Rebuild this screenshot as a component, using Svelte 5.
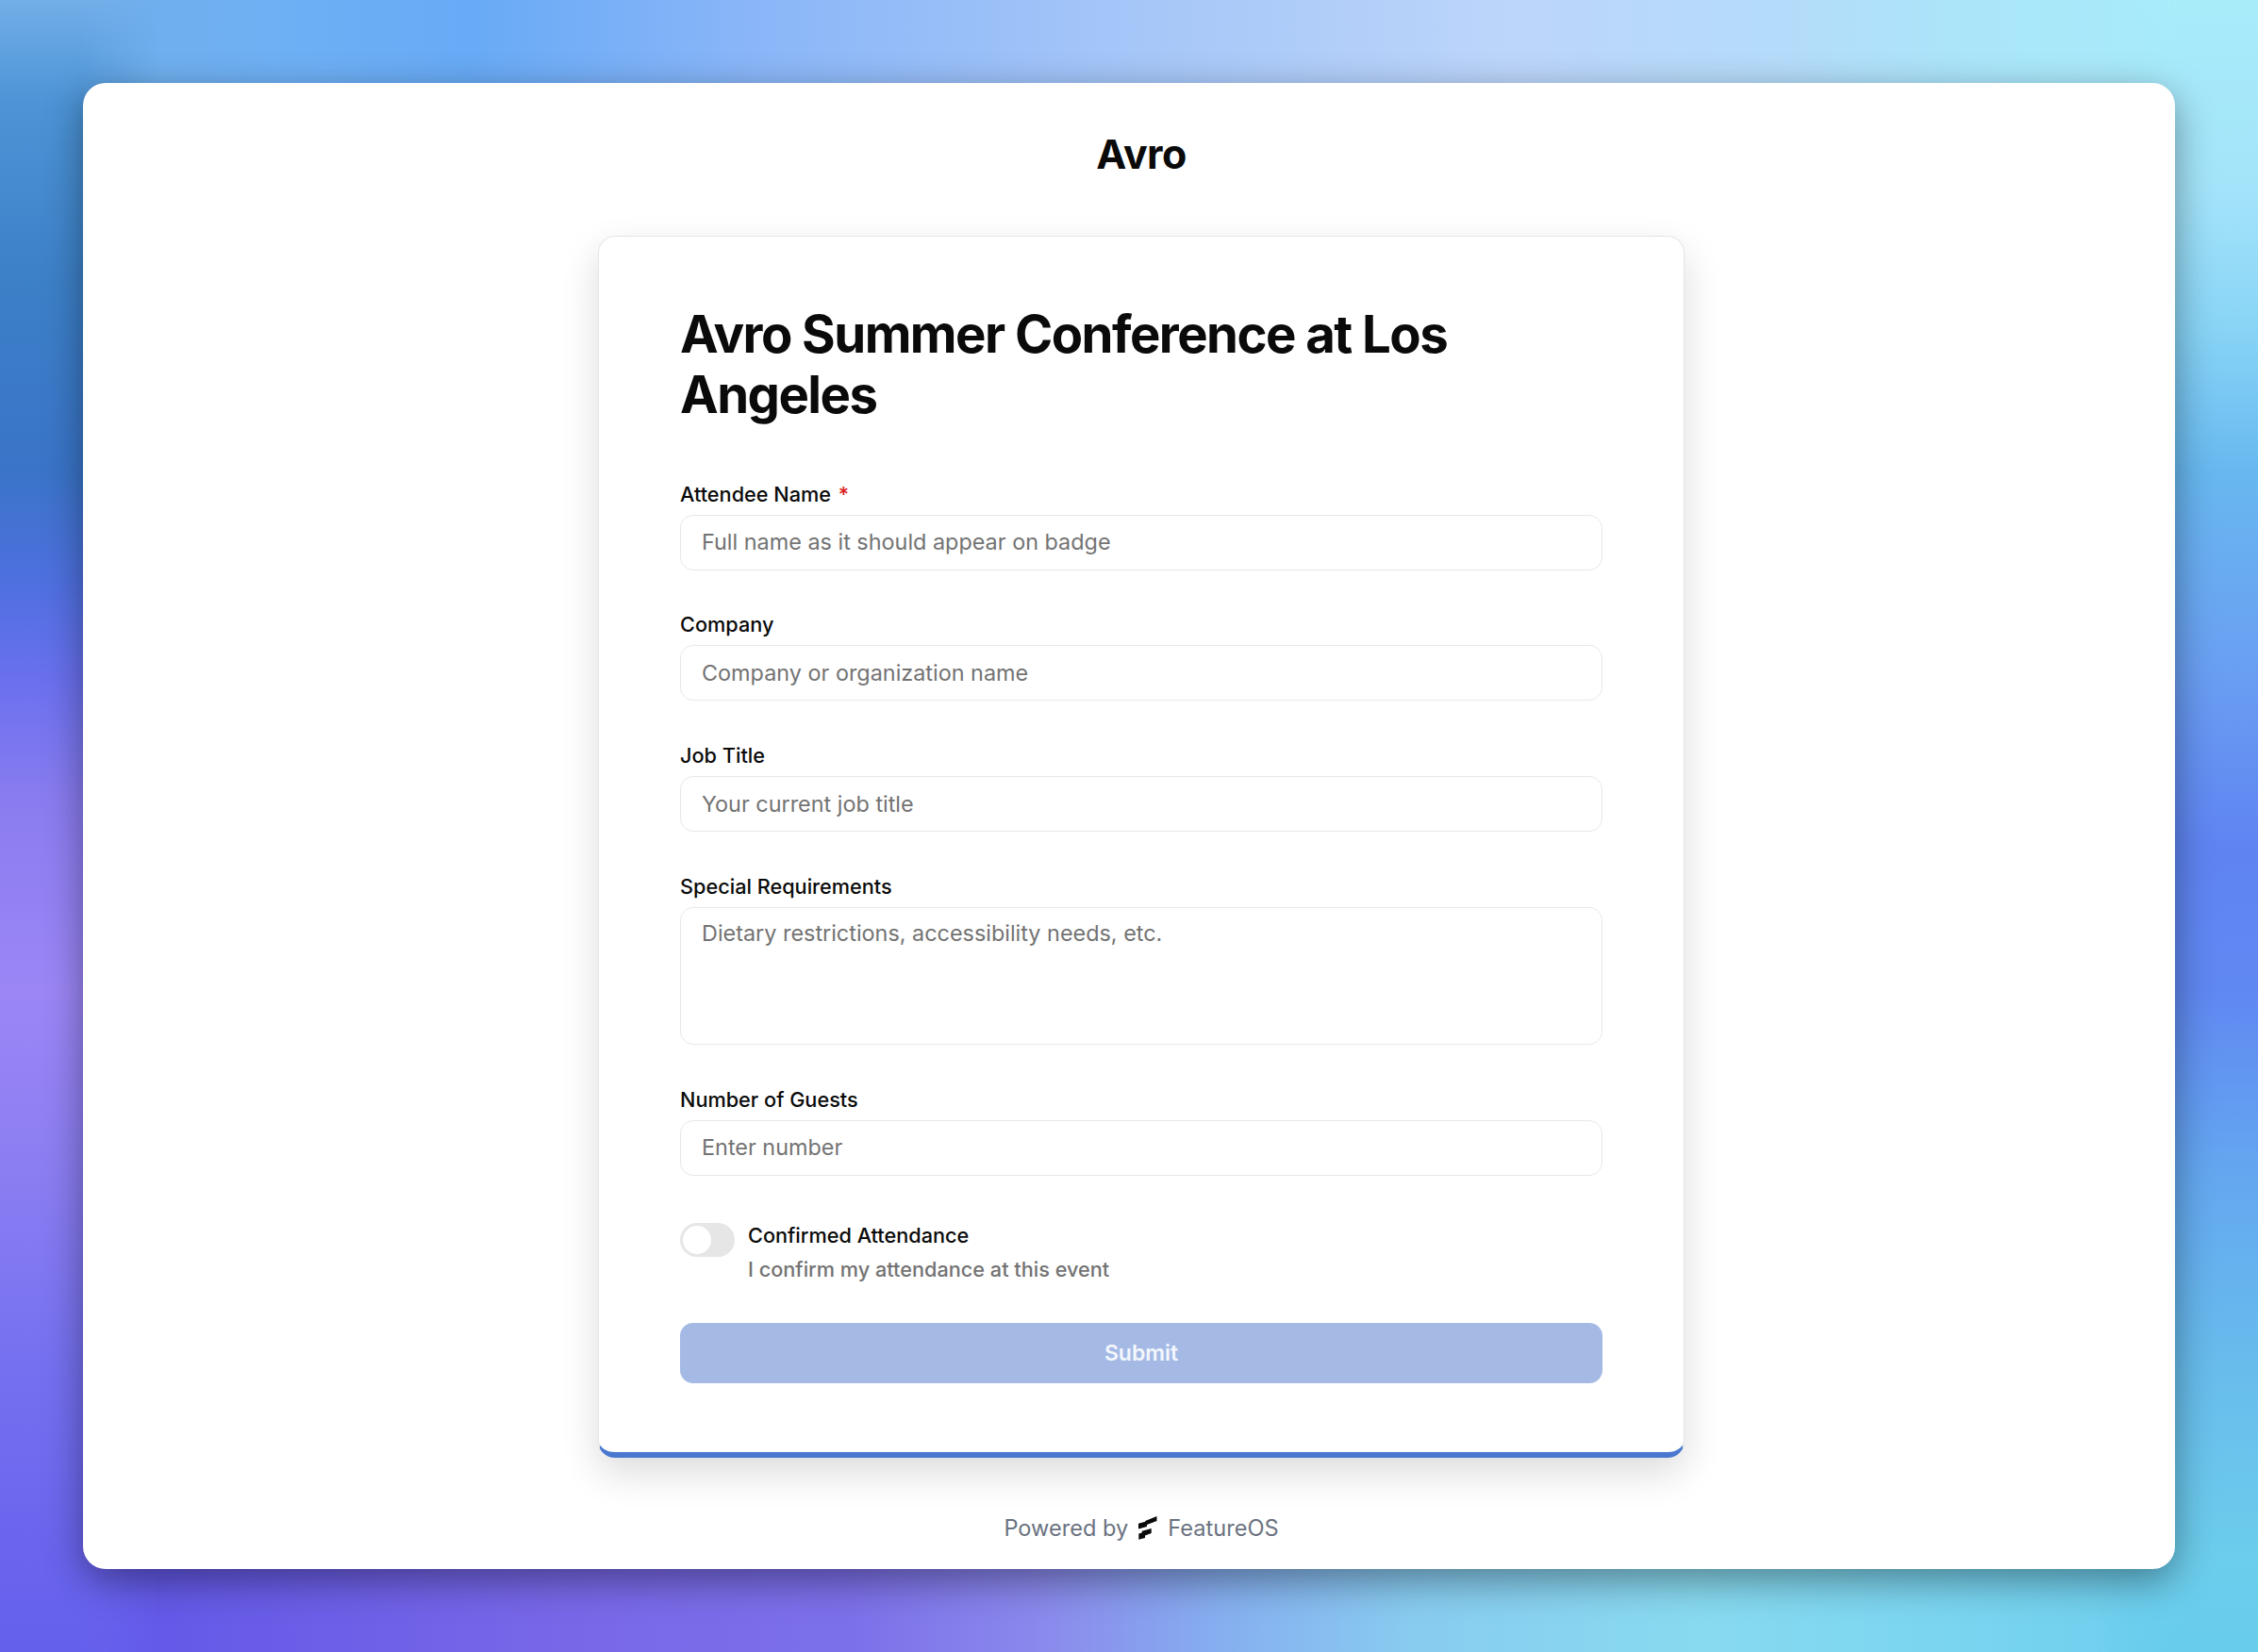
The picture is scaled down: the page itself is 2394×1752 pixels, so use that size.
<script>
  const fields = [
    { label: 'Attendee Name', required: true, placeholder: 'Full name as it should appear on badge' },
    { label: 'Company', placeholder: 'Company or organization name' },
    { label: 'Job Title', placeholder: 'Your current job title' },
    { label: 'Special Requirements', placeholder: 'Dietary restrictions, accessibility needs, etc.', multiline: true },
    { label: 'Number of Guests', placeholder: 'Enter number' }
  ]
</script>

<div class="page">
  <main class="window">
    <div class="brand">Avro</div>

    <form class="card" onsubmit={(e) => e.preventDefault()}>
      <h1>Avro Summer Conference at Los Angeles</h1>

      {#each fields as field}
        <div class="field">
          <label for={field.label}>
            {field.label}
            {#if field.required}<span class="req">*</span>{/if}
          </label>
          {#if field.multiline}
            <textarea id={field.label} placeholder={field.placeholder}></textarea>
          {:else}
            <input id={field.label} type="text" placeholder={field.placeholder} />
          {/if}
        </div>
      {/each}

      <div class="confirm">
        <span class="toggle"><span class="knob"></span></span>
        <div class="confirm-text">
          <div class="confirm-title">Confirmed Attendance</div>
          <div class="confirm-desc">I confirm my attendance at this event</div>
        </div>
      </div>

      <button type="submit">Submit</button>
    </form>

    <footer class="powered">
      <span>Powered by</span>
      <svg width="20" height="25" viewBox="0 0 20 25" aria-hidden="true">
        <path d="M0 7.7 7.3 5.7 7.3 5 19.5 0v5L9 9v2L0 13.5z" fill="#0a0a0a" />
        <path d="M3.7 15.7 13.7 13V18L7 20.5V23L.3 24.7V18.5L3.7 17.5z" fill="#0a0a0a" />
      </svg>
      <span>FeatureOS</span>
    </footer>
  </main>
</div>

<style>
  :global(body) {
    margin: 0;
    overflow: hidden;
  }

  .page {
    position: relative;
    box-sizing: border-box;
    width: 2394px;
    height: 1752px;
    padding: 88px;
    font-family: Inter, "Liberation Sans", sans-serif;
    background:
      linear-gradient(90deg, #72aee8 0, #6eb0f4 300px, #68aaf6 500px, #8ab6f8 800px, #a5c6f8 1200px, #bcd5fa 1600px, #b4dcfa 1900px, #aae6fa 2100px, #a8ecfa 2394px) top / 100% 50% no-repeat,
      linear-gradient(90deg, #6a64f0 0, #6459e8 170px, #7868e8 600px, #7c70ea 900px, #8a88ec 1100px, #86b0f0 1300px, #88ccf0 1500px, #88daf0 1800px, #78d4f0 2100px, #68ccec 2394px) bottom / 100% 50% no-repeat;
  }

  /* soft colour bands down both sides, only the margin around the window shows */
  .page::before,
  .page::after {
    content: "";
    position: absolute;
    top: 0;
    bottom: 0;
    width: 170px;
  }

  .page::before {
    left: 0;
    background: linear-gradient(180deg, #72aee8 0, #4c94d6 110px, #3c80c8 300px, #3a74c8 500px, #4f70e0 620px, #6a70ee 720px, #8a7cf0 850px, #9c86f6 1050px, #8a7df2 1250px, #7570f0 1450px, #6a64ee 1650px, #6560ec 1752px);
    mask-image: linear-gradient(90deg, #000 50%, transparent);
  }

  .page::after {
    right: 0;
    background: linear-gradient(180deg, #a8ecfa 0, #a4e4fa 200px, #88d4f6 350px, #68b8f0 500px, #6aa0f2 700px, #5f84f2 900px, #6088f2 1050px, #64a8f0 1250px, #68bcec 1450px, #6ccdec 1652px, #68ccec 1752px);
    mask-image: linear-gradient(270deg, #000 50%, transparent);
  }

  .window {
    position: relative;
    z-index: 1;
    box-sizing: border-box;
    height: 1576px;
    padding-left: 26px;
    display: flex;
    flex-direction: column;
    align-items: center;
    background: #fff;
    border-radius: 24px;
    box-shadow: 0 12px 40px rgba(0, 0, 0, 0.4);
  }

  .brand {
    margin-top: 48px;
    height: 54px;
    line-height: 54px;
    font-size: 43px;
    font-weight: 700;
    letter-spacing: -0.6px;
    color: #0a0a0a;
  }

  .card {
    box-sizing: border-box;
    width: 1152px;
    height: 1296px;
    margin-top: 60px;
    padding: 71px 86px 0;
    background: #fff;
    border: 1.5px solid #e5e5e5;
    border-bottom: 6.5px solid #4a78d0;
    border-radius: 18px;
    box-shadow: 0 16px 40px rgba(0, 0, 0, 0.14);
  }

  h1 {
    margin: 0 0 60.5px;
    font-size: 54.5px;
    line-height: 64px;
    font-weight: 750;
    letter-spacing: -1.55px;
    color: #0a0a0a;
  }

  .field {
    margin-bottom: 44.8px;
  }

  label {
    display: block;
    height: 26px;
    line-height: 26px;
    margin-bottom: 9px;
    font-size: 21.7px;
    font-weight: 500;
    color: #0a0a0a;
  }

  .req {
    color: #d91c1c;
    margin-left: 2px;
  }

  input,
  textarea {
    display: block;
    box-sizing: border-box;
    width: 100%;
    margin: 0;
    padding: 0 22px 1px;
    height: 59px;
    font-family: inherit;
    font-size: 23.4px;
    color: #0a0a0a;
    background: #fff;
    border: 1.5px solid #e8e8e8;
    border-radius: 14px;
    outline: none;
    resize: none;
  }

  textarea {
    height: 146px;
    padding-top: 10px;
    line-height: 34px;
  }

  input::placeholder,
  textarea::placeholder {
    color: #737373;
    opacity: 1;
  }

  .confirm {
    display: flex;
    gap: 14px;
    margin-top: 50.5px;
  }

  .toggle {
    box-sizing: border-box;
    display: block;
    flex: none;
    width: 58px;
    height: 36px;
    padding: 3px;
    border-radius: 18px;
    background: #e6e6e6;
  }

  .knob {
    display: block;
    width: 30px;
    height: 30px;
    border-radius: 50%;
    background: #fff;
  }

  .confirm-title {
    font-size: 21.7px;
    line-height: 26px;
    font-weight: 500;
    color: #0a0a0a;
  }

  .confirm-desc {
    margin-top: 8px;
    font-size: 21.7px;
    line-height: 30px;
    font-weight: 500;
    color: #737373;
  }

  button {
    display: block;
    width: 100%;
    height: 64px;
    margin-top: 42px;
    border: 0;
    border-radius: 14px;
    font-family: inherit;
    font-size: 23px;
    font-weight: 600;
    color: #f4f7fd;
    background: #a4bae5;
  }

  .powered {
    display: flex;
    align-items: center;
    gap: 11px;
    margin-top: 60px;
    font-size: 23.6px;
    color: #6b7280;
  }
</style>
